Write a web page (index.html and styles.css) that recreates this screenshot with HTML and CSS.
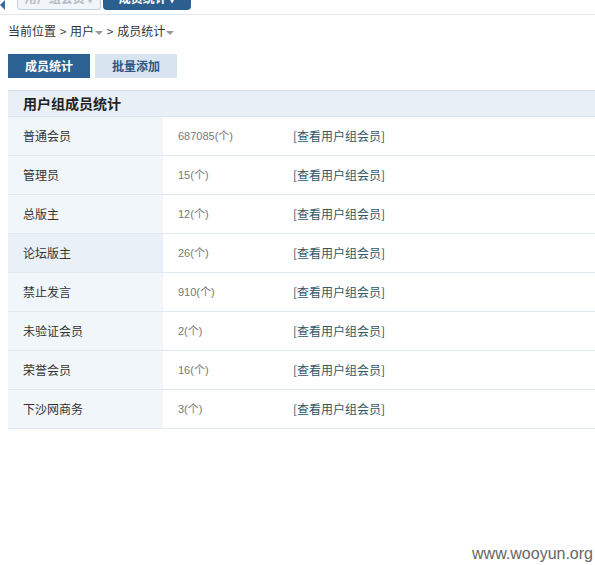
FILE: index.html
```html
<!DOCTYPE html>
<html>
<head>
<meta charset="utf-8">
<link rel="stylesheet" href="styles.css">
</head>
<body>
<div class="topbar">
  <span class="arrow"></span>
  <span class="tab tab-light">用户组会员 ▾</span>
  <span class="tab tab-dark">成员统计 ▾</span>
</div>
<div class="crumb">当前位置 <span class="sep">&gt;</span> 用户<span class="caret"></span> <span class="sep">&gt;</span> 成员统计<span class="caret"></span></div>
<div class="btns">
  <a class="btn btn-on">成员统计</a>
  <a class="btn btn-off">批量添加</a>
</div>
<div class="table">
  <div class="thead">用户组成员统计</div>
  <div class="row"><div class="c1">普通会员</div><div class="c2">687085(个)</div><div class="c3">[查看用户组会员]</div></div>
  <div class="row"><div class="c1">管理员</div><div class="c2">15(个)</div><div class="c3">[查看用户组会员]</div></div>
  <div class="row"><div class="c1">总版主</div><div class="c2">12(个)</div><div class="c3">[查看用户组会员]</div></div>
  <div class="row hover"><div class="c1">论坛版主</div><div class="c2">26(个)</div><div class="c3">[查看用户组会员]</div></div>
  <div class="row"><div class="c1">禁止发言</div><div class="c2">910(个)</div><div class="c3">[查看用户组会员]</div></div>
  <div class="row"><div class="c1">未验证会员</div><div class="c2">2(个)</div><div class="c3">[查看用户组会员]</div></div>
  <div class="row"><div class="c1">荣誉会员</div><div class="c2">16(个)</div><div class="c3">[查看用户组会员]</div></div>
  <div class="row"><div class="c1">下沙网商务</div><div class="c2">3(个)</div><div class="c3">[查看用户组会员]</div></div>
</div>
<div class="wm">www.wooyun.org</div>
</body>
</html>
```
FILE: styles.css
```css
html, body { margin: 0; padding: 0; background: #fff; }
body {
  width: 595px; height: 565px; overflow: hidden; position: relative;
  font-family: "Noto Sans CJK SC", "Liberation Sans", sans-serif;
  font-size: 12px; color: #333;
}
.topbar {
  height: 14px; border-bottom: 1px solid #e3e6ea;
  display: flex; align-items: flex-start; position: relative; overflow: hidden;
}
.arrow {
  width: 0; height: 0; margin: 0 12px 0 0;
  border-top: 5px solid transparent; border-bottom: 5px solid transparent;
  border-right: 5px solid #3a6a98;
}
.tab {
  height: 22px; margin-top: -12px; white-space: nowrap; overflow: hidden;
  line-height: 20px; font-size: 12px; font-weight: bold; text-align: center;
  border-radius: 0 0 4px 4px; box-sizing: border-box;
}
.tab-light {
  width: 84px; background: #f1f4f8; border: 1px solid #c4ced8; border-top: none; color: #b3bcc6;
}
.tab-dark { width: 88px; margin-left: 2px; background: #2a5f90; color: #fff; }
.crumb { margin: 7px 0 0 8px; height: 17px; line-height: 17px; color: #333; white-space: nowrap; }
.sep { color: #444; margin: 0 1px; }
.caret {
  display: inline-block; width: 0; height: 0; vertical-align: middle; margin-left: 1px;
  border-left: 4px solid transparent; border-right: 4px solid transparent; border-top: 4px solid #999;
}
.btns { display: flex; gap: 5px; margin: 15px 0 0 8px; }
.btn {
  width: 82px; height: 24px; line-height: 24px; text-align: center;
  font-weight: bold; font-size: 12px;
}
.btn-on { background: #2c6193; color: #fff; }
.btn-off { background: #d8e5f1; color: #2c5783; }
.table { margin: 12px 0 0 8px; }
.thead {
  height: 25px; line-height: 25px; background: #e8eff7; border-top: 1px solid #d3dfea;
  border-bottom: 1px solid #dbe5ef;
  padding-left: 15px; font-weight: bold; font-size: 14px; color: #222;
}
.row { display: flex; height: 38px; border-bottom: 1px solid #e1e8f0; line-height: 38px; }
.c1 { width: 140px; padding-left: 15px; background: #f1f6fb; color: #333; }
.row.hover .c1 { background: #e9f0f8; }
.c2 { width: 115px; padding-left: 15px; color: #777; font-size: 11px; font-family: "Liberation Sans", "Noto Sans CJK SC", sans-serif; }
.c3 { color: #2f5766; }
.wm {
  position: absolute; right: 2px; bottom: 2px;
  font-family: "Liberation Sans", sans-serif; font-size: 16px; color: #666;
}
```
